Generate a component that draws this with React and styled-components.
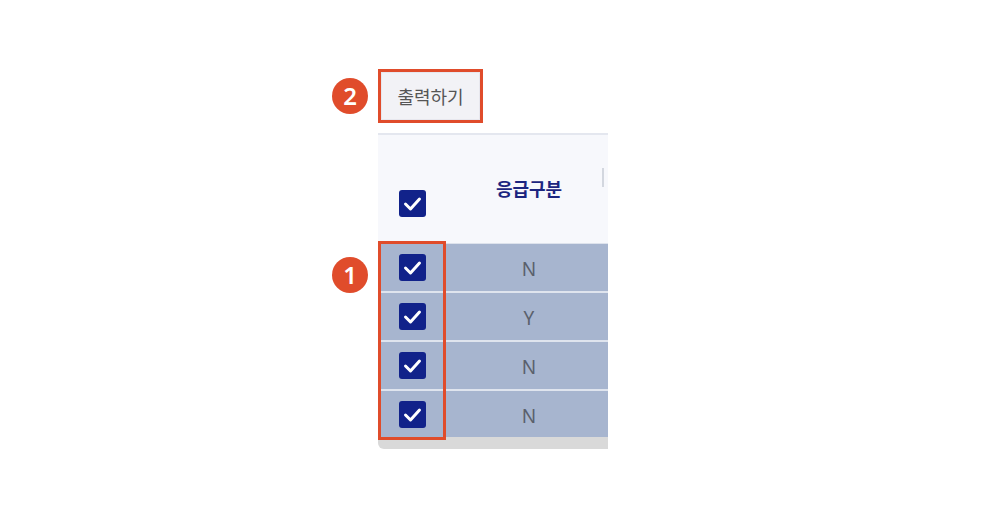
import React from 'react';
import styled, { createGlobalStyle } from 'styled-components';

const GlobalStyle = createGlobalStyle`
	body{
		margin:0;
		background:#fff;
		font-family:"Noto Sans", "Noto Sans CJK KR", sans-serif;
	}
`;

const Page = styled.div`
	display:grid;
	grid-template-columns:36px auto;
	column-gap:10px;
	row-gap:10px;
	justify-content:start;
	align-content:start;
	padding:69px 0 0 332px;
`;

const Badge = styled.div`
	width:36px;
	height:36px;
	border-radius:50%;
	background:#e04c2b;
	color:#fff;
	display:flex;
	align-items:center;
	justify-content:center;
	font-size:24px;
	font-weight:600;
	line-height:1;
	align-self:${p => p.$top ? 'start' : 'center'};
	margin-top:${p => p.$offset || 0}px;
`;

const Highlight = styled.div`
	justify-self:start;
	border:3px solid #e04c2b;
	display:flex;
`;

const PrintButton = styled.button`
	width:99px;
	height:48px;
	border:1px solid #e7e7ee;
	background:#f2f2f6;
	color:#555;
	font-family:"Noto Sans", "Noto Sans CJK KR", sans-serif;
	font-size:18px;
	padding:0;
	cursor:pointer;
`;

const Table = styled.div`
	width:230px;
	overflow:hidden;
	display:flex;
	flex-direction:column;
`;

const Head = styled.div`
	display:flex;
	height:108px;
	border-top:2px solid #e4e7ef;
	border-bottom:1px solid #dde2ec;
	background:#f7f8fc;
`;

const HeadCell = styled.div`
	position:relative;
	flex:0 0 ${p => p.$width}px;
	display:flex;
	justify-content:center;
	align-items:flex-start;
	padding-top:${p => p.$pad}px;
	box-sizing:border-box;
	color:#1c2580;
	font-weight:700;
	font-size:18px;
	line-height:24px;
	&.divided::after{
		content:'';
		position:absolute;
		right:8px;
		top:33px;
		width:2px;
		height:19px;
		background:#d3d7df;
	}
`;

const Body = styled.div`
	display:flex;
`;

const Column = styled.div`
	position:relative;
	flex:0 0 ${p => p.$width}px;
	display:flex;
	flex-direction:column;
	&.marked::after{
		content:'';
		position:absolute;
		top:-3px;
		bottom:-3px;
		left:0;
		right:0;
		border:3px solid #e04c2b;
		pointer-events:none;
	}
`;

const Cell = styled.div`
	height:49px;
	box-sizing:border-box;
	display:flex;
	align-items:center;
	justify-content:center;
	padding-top:${p => p.$shift || 0}px;
	background:#a7b5cf;
	border-bottom:2px solid #dfe4ee;
	color:#5a606c;
	font-size:19px;
	&:last-child{
		height:46px;
		border-bottom:none;
	}
`;

const Scrollbar = styled.div`
	height:12px;
	background:#d9d9d9;
	border-radius:0 0 0 6px;
`;

const Box = styled.span`
	width:27px;
	height:27px;
	border-radius:3px;
	background:#11228a;
	display:inline-flex;
	align-items:center;
	justify-content:center;
`;

const Checkbox = () => (
	<Box>
		<svg width="27" height="27" viewBox="0 0 27 27">
			<polyline points="6.5,14 11.5,19 20.5,9" fill="none" stroke="#fff" strokeWidth="3" strokeLinecap="round" strokeLinejoin="round" />
		</svg>
	</Box>
);

const rows = ['N', 'Y', 'N', 'N'];

const App = () => (
	<>
		<GlobalStyle />
		<Page>
			<Badge>2</Badge>
			<Highlight>
				<PrintButton>출력하기</PrintButton>
			</Highlight>
			<Badge $top $offset={124}>1</Badge>
			<Table>
				<Head>
					<HeadCell $width={68} $pad={55}><Checkbox /></HeadCell>
					<HeadCell $width={166} $pad={42} className='divided'>응급구분</HeadCell>
				</Head>
				<Body>
					<Column $width={68} className='marked'>
						{rows.map((r, i) => <Cell key={i}><Checkbox /></Cell>)}
					</Column>
					<Column $width={166}>
						{rows.map((r, i) => <Cell key={i} $shift={3}>{r}</Cell>)}
					</Column>
				</Body>
				<Scrollbar />
			</Table>
		</Page>
	</>
);

export default App;
